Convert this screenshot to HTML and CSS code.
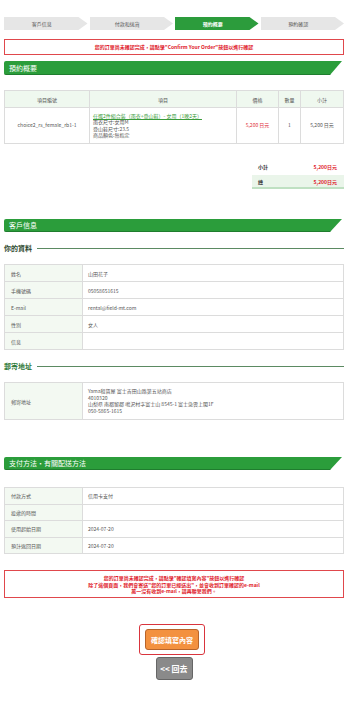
FILE: index.html
```html
<!DOCTYPE html>
<html>
    <head>
        <meta charset="UTF-8">
        <title>預約概要</title>
        <link rel="stylesheet" href="styles.css">
    </head>
    <body>
        <div class="rsv-page">
            <ul class="rsv-steps">
                <li>客戶信息</li>
                <li>付款和送貨</li>
                <li class="is-active">預約概要</li>
                <li>預約確認</li>
            </ul>

            <div class="rsv-notice rsv-notice-top">
                您的訂單尚未確認完成，請點擊"Confirm Your Order"按鈕以進行確認
            </div>

            <h2 class="rsv-band">預約概要</h2>

            <table class="rsv-table rsv-items">
                <tr>
                    <th class="col-code">項目編號</th>
                    <th class="col-name">項目</th>
                    <th class="col-price">價格</th>
                    <th class="col-qty">數量</th>
                    <th class="col-sub">小計</th>
                </tr>
                <tr>
                    <td class="is-center">choice2_rs_female_rb1-1</td>
                    <td>
                        <a href="#">任選2件組合裝（雨衣+登山鞋）- 女用（1晚2天）</a><br>
                        雨衣尺寸:女用M<br>
                        登山鞋尺寸:23.5<br>
                        商品顏色:無指定
                    </td>
                    <td class="is-center is-red">5,200 日元</td>
                    <td class="is-center">1</td>
                    <td class="is-center">5,200 日元</td>
                </tr>
            </table>

            <div class="rsv-total">
                <div class="rsv-total-row">
                    <span>小計</span>
                    <span class="rsv-total-value">5,200日元</span>
                </div>
                <div class="rsv-total-row is-grand">
                    <span>總</span>
                    <span class="rsv-total-value">5,200日元</span>
                </div>
            </div>

            <h2 class="rsv-band rsv-band-customer">客戶信息</h2>

            <h3 class="rsv-subhead">你的資料</h3>
            <table class="rsv-table rsv-info">
                <tr><th>姓名</th><td>山田花子</td></tr>
                <tr><th>手機號碼</th><td>05058651615</td></tr>
                <tr><th>E-mail</th><td>rental@field-mt.com</td></tr>
                <tr><th>性別</th><td>女人</td></tr>
                <tr><th>信息</th><td></td></tr>
            </table>

            <h3 class="rsv-subhead rsv-subhead-mail">郵寄地址</h3>
            <table class="rsv-table rsv-info rsv-address">
                <tr>
                    <th>郵寄地址</th>
                    <td>
                        Yama租賃屋 富士吉田山路第五站商店<br>
                        4010320<br>
                        山梨県 南都留郡 鳴沢村字富士山 8545-1 富士急雲上閣1F<br>
                        050-5865-1615
                    </td>
                </tr>
            </table>

            <h2 class="rsv-band rsv-band-pay">支付方法・有關配送方法</h2>
            <table class="rsv-table rsv-info rsv-pay">
                <tr><th>付款方式</th><td>信用卡支付</td></tr>
                <tr><th>投遞的時間</th><td></td></tr>
                <tr><th>使用起始日期</th><td>2024-07-20</td></tr>
                <tr><th>預計返回日期</th><td>2024-07-20</td></tr>
            </table>

            <div class="rsv-notice rsv-notice-bottom">
                您的訂單尚未確認完成，請點擊"確認填寫內容"按鈕以進行確認<br>
                除了這個頁面，我們會寄送"您的訂單已經送出"，並會收到訂單確認的e-mail<br>
                萬一沒有收到e-mail，請再聯繫我們。
            </div>

            <div class="rsv-actions">
                <div class="rsv-confirm-wrap">
                    <button class="rsv-btn rsv-btn-confirm">確認填寫內容</button>
                </div>
                <button class="rsv-btn rsv-btn-back">&lt;&lt; 回去</button>
            </div>
        </div>
    </body>
</html>
```

FILE: styles.css
```css
* {
    padding: 0;
    margin: 0;
    box-sizing: border-box;
}

html, body {
    width: 100%;
    background-color: #fff;
}

body {
    font-family: "Noto Sans CJK TC", "Noto Sans", sans-serif;
    color: #444;
    font-size: 5px;
}

.rsv-page {
    padding: 17px 7px 30px 4px;
}

/* steps */

.rsv-steps {
    list-style: none;
    display: flex;
    gap: 2px;
    height: 13px;
}

.rsv-steps li {
    flex: 1;
    display: flex;
    align-items: center;
    justify-content: center;
    padding-right: 8px;
    background-color: #e6e6e6;
    color: #555;
    font-size: 5px;
    clip-path: polygon(0 0, calc(100% - 9px) 0, 100% 50%, calc(100% - 9px) 100%, 0 100%);
}

.rsv-steps li.is-active {
    background-color: #2c9c3c;
    color: #fff;
    font-weight: bold;
}

/* notices */

.rsv-notice {
    border: 1px solid #e0474c;
    color: #e0202a;
    font-weight: bold;
    text-align: center;
    font-size: 5px;
}

.rsv-notice-top {
    margin-top: 9px;
    height: 16px;
    line-height: 14px;
}

.rsv-notice-bottom {
    margin-top: 16px;
    height: 28px;
    padding-top: 4px;
    line-height: 6.5px;
}

/* green bands */

.rsv-band {
    margin-top: 6px;
    margin-right: 2px;
    height: 14px;
    line-height: 14px;
    padding-left: 5px;
    background-color: #2b9d3b;
    border-bottom: 1px solid #1f7d2e;
    border-radius: 2px 0 0 2px;
    color: #fff;
    font-size: 7px;
    font-weight: normal;
    clip-path: polygon(0 0, 100% 0, calc(100% - 12px) 100%, 0 100%);
}

.rsv-band-customer {
    margin-top: 30px;
    height: 13px;
    line-height: 13px;
}

.rsv-band-pay {
    margin-top: 37px;
    height: 13px;
    line-height: 13px;
}

/* tables */

.rsv-table {
    width: 100%;
    border-collapse: collapse;
    border: 1px solid #dcdcdc;
    font-size: 5px;
    color: #555;
}

.rsv-table th,
.rsv-table td {
    border: 1px solid #dcdcdc;
    font-weight: normal;
    text-align: left;
    vertical-align: middle;
}

.rsv-items {
    margin-top: 15px;
    table-layout: fixed;
}

.rsv-items th {
    background-color: #eff8ef;
    text-align: center;
    height: 17px;
}

.rsv-items td {
    height: 36px;
    padding: 0 3px;
    line-height: 6.5px;
}

.rsv-items .col-code { width: 85px; }
.rsv-items .col-price { width: 42px; }
.rsv-items .col-qty { width: 22px; }
.rsv-items .col-sub { width: 43px; }

.rsv-items a {
    color: #3a9b3a;
}

.is-center {
    text-align: center !important;
}

.is-red {
    color: #e0303a;
}

/* totals */

.rsv-total {
    margin: 15px 0 0 auto;
    width: 92px;
}

.rsv-total-row {
    display: flex;
    justify-content: space-between;
    align-items: center;
    height: 14px;
    padding: 0 7px 0 6px;
    font-size: 5px;
    font-weight: bold;
    color: #333;
}

.rsv-total-row.is-grand {
    margin-top: 2px;
    background-color: #eaf5ea;
    border-bottom: 2px solid #bfe0c2;
}

.rsv-total-value {
    color: #e0202a;
}

/* sub headings */

.rsv-subhead {
    display: flex;
    align-items: center;
    gap: 5px;
    margin-top: 9px;
    height: 14px;
    font-size: 7px;
    font-weight: bold;
    color: #2d4a30;
}

.rsv-subhead::after {
    content: "";
    flex: 1;
    border-top: 1px solid #5b8a62;
}

.rsv-subhead-mail {
    margin-top: 9px;
    color: #2f7a3a;
}

.rsv-info {
    margin-top: 9px;
}

.rsv-info th {
    width: 78px;
    background-color: #f3f9f2;
    padding-left: 6px;
    height: 17px;
}

.rsv-info td {
    padding-left: 5px;
}

.rsv-address {
    margin-top: 9px;
}

.rsv-address td {
    height: 37px;
    line-height: 6.5px;
}

.rsv-pay {
    margin-top: 17px;
}

.rsv-pay th {
    height: 16.5px;
}

/* buttons */

.rsv-actions {
    display: flex;
    flex-direction: column;
    align-items: center;
    margin-top: 26px;
    gap: 2px;
}

.rsv-confirm-wrap {
    border: 1px solid #d9343d;
    border-radius: 3px;
    padding: 4px 5px;
    margin-left: -4px;
}

.rsv-btn {
    font-family: "Noto Sans CJK TC", "Noto Sans", sans-serif;
    font-weight: bold;
    color: #fff;
    border-radius: 3px;
    cursor: pointer;
}

.rsv-btn-confirm {
    width: 54px;
    height: 21px;
    background-color: #f3913f;
    border: 1px solid #b8642a;
    font-size: 7px;
}

.rsv-btn-back {
    width: 37px;
    height: 23px;
    background-color: #8a8a8a;
    border: 1px solid #666;
    font-size: 8px;
}
```
